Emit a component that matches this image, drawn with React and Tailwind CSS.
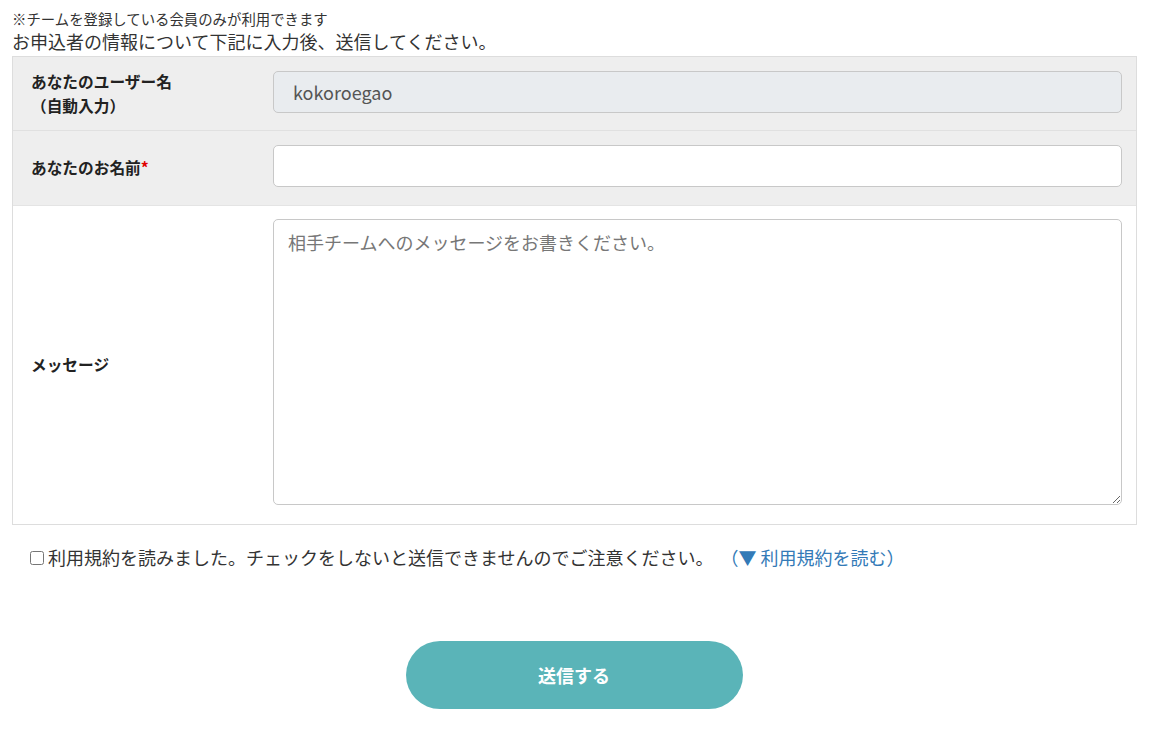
import React from 'react';

const font = { fontFamily: '"Noto Sans CJK JP", "Noto Sans", sans-serif' };

const App = () => {
  return (
    <div className="min-h-[734px] bg-white text-[#333]" style={font}>
      <div className="px-3 pt-[10px]">
        <p className="text-[14.4px] leading-[18px]">※チームを登録している会員のみが利用できます</p>
        <p className="text-[18px] leading-[24px] mt-[1px]">お申込者の情報について下記に入力後、送信してください。</p>

        {/* Form table */}
        <div className="mt-[3px] w-[1125px] border border-[#dddddd]">
          <div className="flex h-[74px] items-center bg-[#eeeeee] border-b border-[#e0e0e0]">
            <div className="w-[260px] shrink-0 pl-[18px] text-[15.7px] font-bold leading-[24px] text-[#222]">
              あなたのユーザー名<br />（自動入力）
            </div>
            <div className="flex-1 self-start pt-[14px] pr-[14px]">
              <input
                type="text"
                readOnly
                value="kokoroegao"
                className="block h-[42px] w-full rounded-[5px] border border-[#c8c8c8] bg-[#e9ecef] px-[19px] text-[18px] text-[#555] outline-none"
                style={font}
              />
            </div>
          </div>
          <div className="flex h-[75px] items-center bg-[#eeeeee] border-b border-[#e4e4e4]">
            <div className="w-[260px] shrink-0 pl-[18px] text-[15.7px] font-bold text-[#222]">
              あなたのお名前<span className="text-[#e00000]">*</span>
            </div>
            <div className="flex-1 self-start pt-[14px] pr-[14px]">
              <input
                type="text"
                className="block h-[42px] w-full rounded-[5px] border border-[#c8c8c8] bg-white px-[19px] text-[18px] text-[#555] outline-none"
                style={font}
              />
            </div>
          </div>
          <div className="flex h-[318px] items-center bg-white">
            <div className="w-[260px] shrink-0 pl-[18px] text-[15.7px] font-bold text-[#222]">メッセージ</div>
            <div className="flex-1 self-start pt-[13px] pr-[14px]">
              <textarea
                placeholder="相手チームへのメッセージをお書きください。"
                className="block h-[286px] w-full rounded-[5px] border border-[#c8c8c8] bg-white px-[14px] py-[9px] text-[18px] text-[#555] placeholder:text-[#777] outline-none"
                style={font}
              />
            </div>
          </div>
        </div>

        {/* Agreement */}
        <div className="mt-[19px] flex items-center pl-[18px] text-[18px]">
          <label className="flex items-center">
            <input type="checkbox" className="mr-[4px] h-[14px] w-[14px]" />
            <span>利用規約を読みました。チェックをしないと送信できませんのでご注意ください。</span>
          </label>
          <a href="#" className="ml-[7px] text-[#337ab7]">（▼ 利用規約を読む）</a>
        </div>

        {/* Submit */}
        <div className="mt-[70px] flex justify-center pr-[1px]">
          <button
            type="button"
            className="h-[68px] w-[337px] rounded-full bg-[#5ab4b8] text-[18px] font-bold text-white"
            style={font}
          >
            送信する
          </button>
        </div>
      </div>
    </div>
  );
};

export default App;
